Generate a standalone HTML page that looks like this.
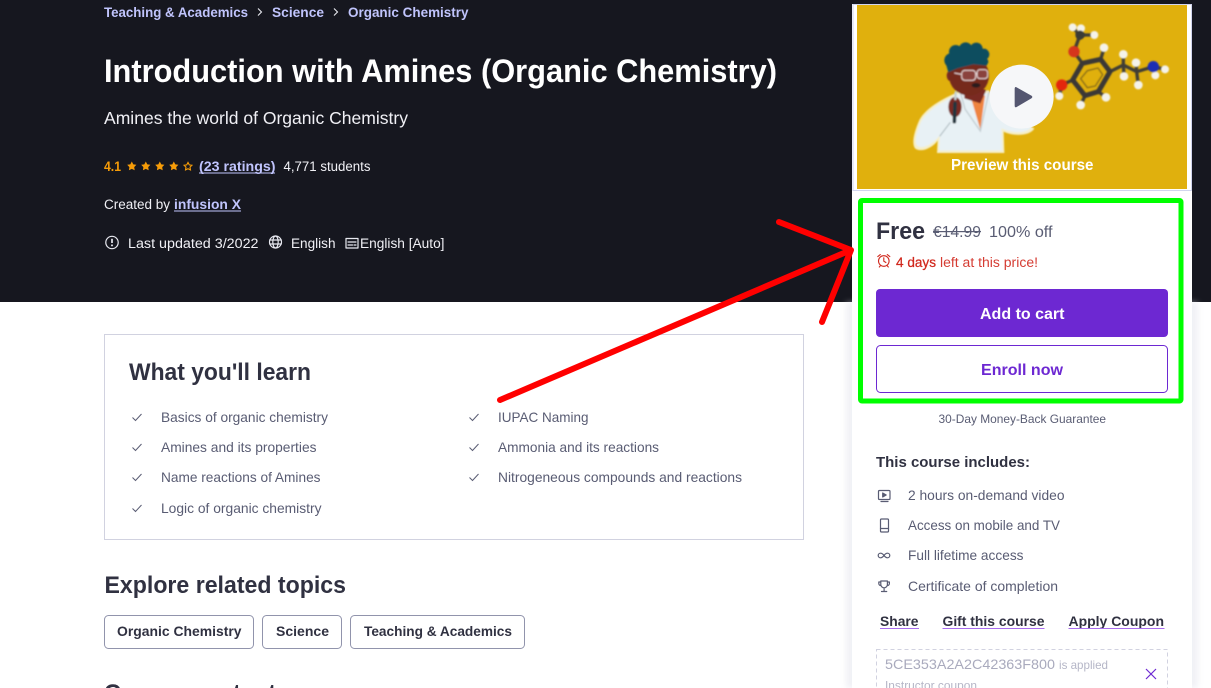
<!DOCTYPE html>
<html lang="en"><head><meta charset="utf-8"><title>Introduction with Amines (Organic Chemistry)</title>
<style>
html,body{margin:0;padding:0;width:1211px;height:688px;overflow:hidden;background:#fff}
svg{display:block;position:absolute;left:0;top:0}
text{font-family:"Liberation Sans",sans-serif;white-space:pre}
.b{font-weight:700}
.d{fill:#595c73;font-size:14px}
.h{fill:#303141;font-weight:700}
.l{fill:#c0c4fc}
.w{fill:#fff}
.ic{fill:none;stroke:#595c73;stroke-width:1.2;stroke-linecap:round;stroke-linejoin:round}
.iw{fill:none;stroke:#e8e9f0;stroke-width:1.2;stroke-linecap:round;stroke-linejoin:round}
</style></head>
<body>
<svg width="1211" height="688" viewBox="0 0 1211 688" xmlns="http://www.w3.org/2000/svg">
<defs>
<filter id="soft" x="-5%" y="-5%" width="110%" height="110%"><feGaussianBlur stdDeviation="2.500"/></filter>
<filter id="sh" x="-10%" y="-10%" width="120%" height="120%"><feGaussianBlur stdDeviation="3"/></filter>
<clipPath id="vid"><rect x="857" y="5" width="330" height="184"/></clipPath>
</defs>

<!-- header -->
<rect width="1211" height="302" fill="#16171f"/>
<text class="b l" x="104" y="17" font-size="13.5" textLength="144" lengthAdjust="spacingAndGlyphs">Teaching &amp; Academics</text>
<path d="M258 8.5l3.5 3.5-3.5 3.5M334 8.5l3.5 3.5-3.5 3.5" fill="none" stroke="#e8e9f0" stroke-width="1.1"/>
<text class="b l" x="272" y="17" font-size="13.5" textLength="52" lengthAdjust="spacingAndGlyphs">Science</text>
<text class="b l" x="348" y="17" font-size="13.5" textLength="120.500" lengthAdjust="spacingAndGlyphs">Organic Chemistry</text>
<text class="b w" x="104" y="82" font-size="32" textLength="673" lengthAdjust="spacingAndGlyphs">Introduction with Amines (Organic Chemistry)</text>
<text fill="#f0f0f5" x="104" y="124" font-size="17.500" textLength="304" lengthAdjust="spacingAndGlyphs">Amines the world of Organic Chemistry</text>
<text class="b" fill="#f69c08" x="104" y="171" font-size="14" textLength="17" lengthAdjust="spacingAndGlyphs">4.1</text>
<g fill="#f69c08">
<path transform="translate(131.800 166.300)" d="M0-4.800L1.500-1.900 4.600-1.500 2.400 .8 2.900 4 0 2.600-2.900 4-2.400 .8-4.600-1.500-1.500-1.900Z"/>
<path transform="translate(145.800 166.300)" d="M0-4.800L1.500-1.900 4.600-1.500 2.400 .8 2.900 4 0 2.600-2.900 4-2.400 .8-4.600-1.500-1.500-1.900Z"/>
<path transform="translate(159.800 166.300)" d="M0-4.800L1.500-1.900 4.600-1.500 2.400 .8 2.900 4 0 2.600-2.900 4-2.400 .8-4.600-1.500-1.500-1.900Z"/>
<path transform="translate(173.800 166.300)" d="M0-4.800L1.500-1.900 4.600-1.500 2.400 .8 2.900 4 0 2.600-2.900 4-2.400 .8-4.600-1.500-1.500-1.900Z"/>
<path transform="translate(188 166.500) scale(.85)" d="M0-4.800L1.500-1.900 4.600-1.500 2.400 .8 2.900 4 0 2.600-2.900 4-2.400 .8-4.600-1.500-1.500-1.900Z" fill="none" stroke="#f69c08" stroke-width="1.300"/>
</g>
<text class="b l" x="199" y="171" font-size="14" textLength="76.500" lengthAdjust="spacingAndGlyphs">(23 ratings)</text>
<rect x="199" y="172.500" width="76" height="1" fill="#c0c4fc"/>
<text fill="#f0f0f5" x="283.500" y="171" font-size="13.500" textLength="87" lengthAdjust="spacingAndGlyphs">4,771 students</text>
<text fill="#f0f0f5" x="104" y="209" font-size="13.500" textLength="66" lengthAdjust="spacingAndGlyphs">Created by</text>
<text class="b l" x="174" y="209" font-size="14" textLength="67" lengthAdjust="spacingAndGlyphs">infusion X</text>
<rect x="174" y="210.500" width="67" height="1" fill="#c0c4fc"/>
<circle class="iw" cx="112" cy="242.500" r="6.200" stroke-width="1.400"/>
<path d="M112 238.800v4.200" stroke="#e8e9f0" stroke-width="1.700" fill="none"/><circle cx="112" cy="245.400" r="1" fill="#e8e9f0"/>
<circle class="iw" cx="275.500" cy="242" r="6"/>
<ellipse class="iw" cx="275.500" cy="242" rx="2.700" ry="6"/>
<path class="iw" d="M269.800 240h11.400M269.800 244h11.400"/>
<text fill="#f0f0f5" x="128" y="248" font-size="13.500" textLength="130.500" lengthAdjust="spacingAndGlyphs">Last updated 3/2022</text>
<text fill="#f0f0f5" x="291" y="248" font-size="13.500" textLength="44.500" lengthAdjust="spacingAndGlyphs">English</text>
<rect class="iw" x="346" y="238.500" width="12" height="9.500"/>
<path class="iw" d="M348 242h8M348 245h4.500M354 245h2"/>
<text fill="#f0f0f5" x="360" y="248" font-size="13.500" textLength="84.500" lengthAdjust="spacingAndGlyphs">English [Auto]</text>

<!-- sidebar card -->
<rect x="846" y="302" width="352" height="386" fill="#dfe0ea" opacity=".45" filter="url(#sh)"/>
<rect x="852" y="4" width="340" height="684" fill="#fff"/>
<rect x="853" y="4.500" width="338.500" height="186" fill="none" stroke="#d1d5ee" stroke-width="1"/>

<!-- video preview -->
<g clip-path="url(#vid)">
<rect x="857" y="5" width="330" height="185" fill="#e0b00d"/>
<g transform="translate(850 0) scale(.33333)">
 <g filter="url(#soft)" transform="translate(165 105)">
  <path d="M166 168C110 192 56 222 40 262 26 296 20 326 30 340 50 356 88 334 98 316L96 354 298 354 296 290C322 304 376 304 388 280L300 236 252 166Z" fill="#f6efc8"/>
  <path d="M168 174C112 198 62 228 46 264 34 294 28 320 36 332 54 346 88 324 104 302L102 347 292 347 290 280C318 296 370 296 380 276L296 238 250 174Z" fill="#e8f1f5"/>
  <path d="M196 182L226 284 240 182Z" fill="#ee8440"/>
  <path d="M166 172L180 222 226 288 252 170" fill="none" stroke="#c2cdd2" stroke-width="4"/>
  <path d="M104 304L136 262" stroke="#a9b6bb" stroke-width="3"/>
  <path d="M178 150L178 190 226 205 244 165Z" fill="#7a2b22"/>
  <ellipse cx="138" cy="122" rx="13" ry="17" fill="#7a2b22"/>
  <ellipse cx="192" cy="122" rx="60" ry="60" fill="#76291f"/>
  <g fill="#0f4d5f">
   <circle cx="140" cy="76" r="22"/><circle cx="152" cy="50" r="20"/><circle cx="182" cy="42" r="20"/><circle cx="214" cy="42" r="19"/><circle cx="236" cy="58" r="17"/><circle cx="238" cy="80" r="12"/>
   <path d="M122 84L130 112 158 100 205 88 246 92 246 60 150 45Z"/>
  </g>
  <g fill="#9a5a55" fill-opacity=".55" stroke="#ecdcdc" stroke-width="3">
   <rect x="170" y="106" width="42" height="30" rx="10"/>
   <rect x="216" y="104" width="32" height="27" rx="9"/>
  </g>
  <path d="M148 114L170 118M212 116H216" stroke="#ecdcdc" stroke-width="3"/>
  <ellipse cx="213" cy="151" rx="13" ry="7" fill="#2b1a1c"/>
  <ellipse cx="150" cy="216" rx="20" ry="30" fill="#7a2b22"/>
  <path d="M150 205L148 260" stroke="#22343c" stroke-width="11" stroke-linecap="round"/>
  <path d="M152 172L151 192" stroke="#c4d2d5" stroke-width="7" stroke-linecap="round"/>
 </g>
 <g filter="url(#soft)" fill="none" stroke-linecap="round" stroke-linejoin="round">
  <g stroke="#3f3c36" stroke-width="10">
   <path d="M697 190L672 155 690 105M690 105L668 82M690 105L693 85M690 105L733 105M752 178L762 145M780 215L820 195 860 215 910 200M820 195L820 165M820 195L822 228M860 215L858 188M860 215L865 255M910 200L916 226M910 200L945 208M668 240L635 255 628 288M745 275L768 292M705 287L692 315"/>
  </g>
  <path d="M697 190L752 178 780 215 745 275 705 287 668 240Z" stroke="#3b3935" stroke-width="15"/>
  <path d="M712 212L744 204 758 224 736 258 712 263 692 236Z" stroke="#8d7018" stroke-width="4"/>
 </g>
 <g filter="url(#soft)">
  <g fill="#f5f3ea">
  <circle cx="668" cy="82" r="12"/><circle cx="693" cy="85" r="12"/><circle cx="733" cy="105" r="12"/><circle cx="762" cy="143" r="13"/><circle cx="820" cy="163" r="13"/><circle cx="822" cy="229" r="13"/><circle cx="858" cy="188" r="13"/><circle cx="865" cy="255" r="13"/><circle cx="916" cy="226" r="12"/><circle cx="945" cy="208" r="12"/><circle cx="628" cy="288" r="12"/><circle cx="768" cy="292" r="13"/><circle cx="692" cy="315" r="13"/>
  </g>
  <circle cx="672" cy="155" r="17" fill="#d6361a"/>
  <circle cx="635" cy="255" r="17" fill="#e4280f"/>
  <circle cx="690" cy="105" r="14" fill="#3a3a36"/>
  <circle cx="910" cy="200" r="17" fill="#1b2fb4"/>
 </g>
 <circle cx="515" cy="290" r="96" fill="#f6f7f9"/>
 <path d="M500 262L544 287Q550 291 544 295L500 321Q494 324 494 316V267Q494 259 500 262Z" fill="#545670"/>
</g>
<text class="b w" x="951" y="170" font-size="15.500" textLength="142.500" lengthAdjust="spacingAndGlyphs">Preview this course</text>
</g>

<!-- buy box -->
<text class="h" x="876" y="239" font-size="24" textLength="49" lengthAdjust="spacingAndGlyphs">Free</text>
<text fill="#595c73" x="933" y="237" font-size="16" textLength="48" lengthAdjust="spacingAndGlyphs">€14.99</text>
<rect x="933" y="231" width="48" height="1.200" fill="#595c73"/>
<text fill="#595c73" x="989" y="237" font-size="16" textLength="63.500" lengthAdjust="spacingAndGlyphs">100% off</text>
<g fill="none" stroke="#d1281d" stroke-width="1.100" stroke-linecap="round">
<circle cx="883.800" cy="261" r="5.300"/><path d="M883.800 257.800v3.400l2.100 1.300M877.800 256.600l2.500-2M889.800 256.600l-2.500-2M880.300 265.800l-1 1.200M887.300 265.800l1 1.200"/>
</g>
<text class="b" fill="#d1281d" x="896" y="267" font-size="13.500" textLength="40" lengthAdjust="spacingAndGlyphs" style="font-weight:400;stroke:#d1281d;stroke-width:.25">4 days</text>
<text fill="#d1281d" x="940" y="267" font-size="13.500" textLength="98" lengthAdjust="spacingAndGlyphs" opacity=".9">left at this price!</text>
<rect x="876" y="289" width="292" height="48" rx="4" fill="#6d28d2"/>
<text class="b w" x="980" y="319" font-size="16" textLength="84.500" lengthAdjust="spacingAndGlyphs">Add to cart</text>
<rect x="876.500" y="345.500" width="291" height="47" rx="4" fill="#fff" stroke="#6d28d2"/>
<text class="b" fill="#6d28d2" x="981" y="375" font-size="16" textLength="82" lengthAdjust="spacingAndGlyphs">Enroll now</text>
<rect x="860.500" y="200.500" width="320.500" height="200.500" fill="none" stroke="#0f0" stroke-width="5" rx="1.500"/>
<text fill="#595c73" x="938.500" y="423" font-size="12" textLength="167.500" lengthAdjust="spacingAndGlyphs">30-Day Money-Back Guarantee</text>

<text class="h" x="876" y="467" font-size="15" textLength="154" lengthAdjust="spacingAndGlyphs">This course includes:</text>
<g class="ic">
<rect x="878.500" y="490.500" width="11.500" height="9" rx="1"/><path d="M881 501.500h7"/><path d="M882.700 493l3.500 2-3.500 2z" fill="#595c73"/>
<rect x="880.500" y="519" width="8" height="13" rx="1"/><path d="M880.500 528.500h8"/>
<path d="M884 555.500c-1.500-2-2.200-2.300-3.500-2.300a2.300 2.300 0 0 0 0 4.600c1.300 0 2-.3 3.500-2.300s2.200-2.300 3.500-2.300a2.300 2.300 0 0 1 0 4.600c-1.300 0-2-.3-3.500-2.300z"/>
<path d="M880.800 581h6.600v3.500a3.300 3.300 0 0 1-6.600 0zM880.800 582h-2v1.500a2 2 0 0 0 2 2M887.400 582h2v1.500a2 2 0 0 1-2 2M884.100 588v3M881.500 591.500h5.200"/>
</g>
<text class="d" x="908" y="500" textLength="156.500" lengthAdjust="spacingAndGlyphs">2 hours on-demand video</text>
<text class="d" x="908" y="530" textLength="152" lengthAdjust="spacingAndGlyphs">Access on mobile and TV</text>
<text class="d" x="908" y="560" textLength="115.500" lengthAdjust="spacingAndGlyphs">Full lifetime access</text>
<text class="d" x="908" y="591" textLength="150" lengthAdjust="spacingAndGlyphs">Certificate of completion</text>
<text class="h" x="880" y="626" font-size="14" textLength="38.500" lengthAdjust="spacingAndGlyphs">Share</text>
<text class="h" x="942.500" y="626" font-size="14" textLength="102" lengthAdjust="spacingAndGlyphs">Gift this course</text>
<text class="h" x="1068.500" y="626" font-size="14" textLength="95.500" lengthAdjust="spacingAndGlyphs">Apply Coupon</text>
<g fill="#a96df0"><rect x="880" y="628" width="39" height="1"/><rect x="942.500" y="628" width="102" height="1"/><rect x="1068.500" y="628" width="96" height="1"/></g>
<rect x="876.500" y="649.500" width="291" height="60" fill="none" stroke="#d1d2e0" stroke-dasharray="4 3"/>
<text fill="#a9aabd" x="885" y="669" font-size="14" textLength="170" lengthAdjust="spacingAndGlyphs">5CE353A2A2C42363F800</text>
<text fill="#b5b6c7" x="1059" y="669" font-size="12" textLength="49" lengthAdjust="spacingAndGlyphs">is applied</text>
<text fill="#b5b6c7" x="885" y="689.500" font-size="12" textLength="92" lengthAdjust="spacingAndGlyphs">Instructor coupon</text>
<path d="M1146 669l10 10M1156 669l-10 10" stroke="#6d28d2" stroke-width="1.200" fill="none"/>

<!-- what you'll learn -->
<rect x="104.500" y="334.500" width="699" height="205" fill="#fff" stroke="#d1d2e0"/>
<text class="h" x="129" y="380" font-size="24" textLength="182" lengthAdjust="spacingAndGlyphs">What you'll learn</text>
<g fill="none" stroke="#595c73" stroke-width="1">
<path d="M132.500 417.500l3 3 6-6.500M132.500 447.500l3 3 6-6.500M132.500 477.500l3 3 6-6.500M132.500 508.500l3 3 6-6.500M469.500 417.500l3 3 6-6.500M469.500 447.500l3 3 6-6.500M469.500 477.500l3 3 6-6.500"/>
</g>
<text class="d" x="161" y="422" textLength="167" lengthAdjust="spacingAndGlyphs">Basics of organic chemistry</text>
<text class="d" x="161" y="452" textLength="155.500" lengthAdjust="spacingAndGlyphs">Amines and its properties</text>
<text class="d" x="161" y="482" textLength="159.500" lengthAdjust="spacingAndGlyphs">Name reactions of Amines</text>
<text class="d" x="161" y="513" textLength="160.500" lengthAdjust="spacingAndGlyphs">Logic of organic chemistry</text>
<text class="d" x="498" y="422" textLength="90.500" lengthAdjust="spacingAndGlyphs">IUPAC Naming</text>
<text class="d" x="498" y="452" textLength="161" lengthAdjust="spacingAndGlyphs">Ammonia and its reactions</text>
<text class="d" x="498" y="482" textLength="244" lengthAdjust="spacingAndGlyphs">Nitrogeneous compounds and reactions</text>

<!-- topics -->
<text class="h" x="104.500" y="593" font-size="24" textLength="241.500" lengthAdjust="spacingAndGlyphs">Explore related topics</text>
<g fill="#fff" stroke="#9194ac">
<rect x="104.500" y="615.500" width="149" height="33" rx="4"/>
<rect x="262.500" y="615.500" width="79" height="33" rx="4"/>
<rect x="350.500" y="615.500" width="174" height="33" rx="4"/>
</g>
<text class="h" x="117" y="636" font-size="14" textLength="124.500" lengthAdjust="spacingAndGlyphs">Organic Chemistry</text>
<text class="h" x="276" y="636" font-size="14" textLength="53" lengthAdjust="spacingAndGlyphs">Science</text>
<text class="h" x="364" y="636" font-size="14" textLength="148" lengthAdjust="spacingAndGlyphs">Teaching &amp; Academics</text>
<text class="h" x="104" y="701" font-size="24" textLength="172" lengthAdjust="spacingAndGlyphs">Course content</text>

<!-- red annotation arrow -->
<g fill="none" stroke="#f00" stroke-width="6" stroke-linecap="round" stroke-linejoin="round">
<path d="M500 400L851 250M779 222L851 250 822 322"/>
</g>
</svg>
</body></html>
